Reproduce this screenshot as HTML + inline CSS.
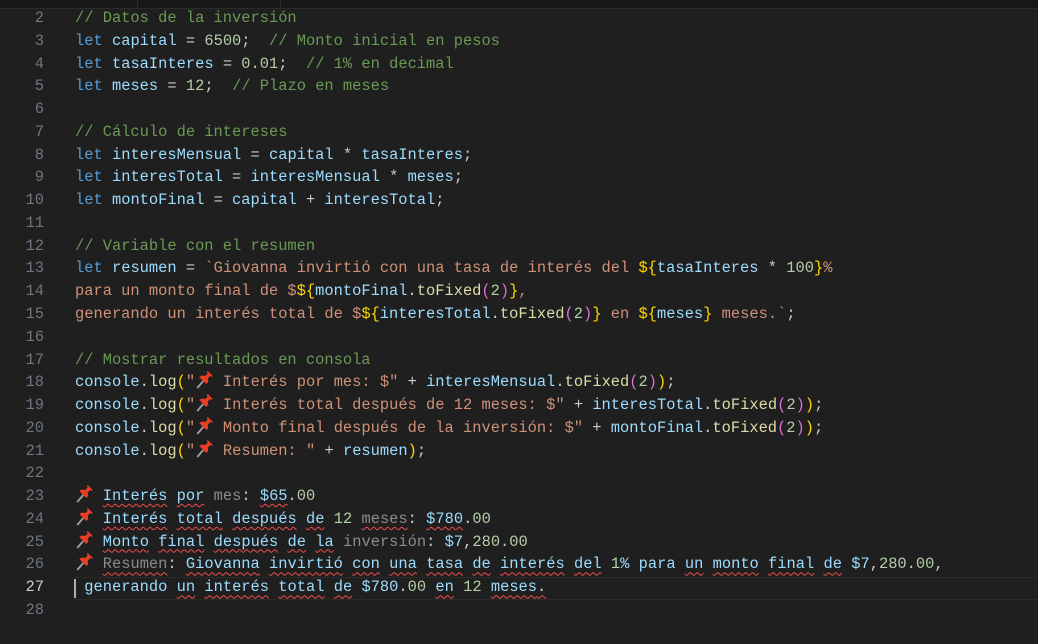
<!DOCTYPE html>
<html><head><meta charset="utf-8"><style>
html,body{margin:0;padding:0;background:#1f1f1f;width:1038px;height:626px;overflow:hidden}
.top{position:absolute;left:0;top:0;width:1038px;height:8px;background:#181818;border-bottom:1px solid #2b2b2b}
.top i{position:absolute;top:0;height:8px;width:1px;background:#2b2b2b}
.ed{position:absolute;left:0;top:7px;font-family:"Liberation Mono",monospace;font-size:15.4px;line-height:22.77px;white-space:pre;color:#cccccc}
.ln{position:absolute;left:0;width:44px;text-align:right;color:#6e7681}
.cd{position:absolute;left:75px}
.k{color:#569cd6}.v{color:#9cdcfe}.n{color:#b5cea8}.c{color:#6a9955}.s{color:#ce9178}.f{color:#dcdcaa}
.y{color:#ffd700}.m{color:#da70d6}.g{color:#8b8b8b}
.w{text-decoration:underline wavy #f14c4c;text-decoration-thickness:1px;text-underline-offset:3px}
.pin{display:inline-block;width:18.5px;height:18px;vertical-align:-3px}
.cur{position:absolute;left:73px;right:0;border-top:1px solid #2a2a2a;border-bottom:1px solid #2a2a2a;height:21px}
.caret{position:absolute;left:74px;width:2px;height:19px;background:#aeafad}
</style></head><body>
<div class="top"><i style="left:137px"></i><i style="left:280px"></i></div>
<div class="cur" style="top:577px"></div>
<div class="caret" style="top:579px"></div>
<svg width="0" height="0" style="position:absolute"><defs><g id="p"><path d="M2 17 L8 10" stroke="#a0a0a0" stroke-width="1.8"/><path d="M6 8 L11 13 L13 11 L12.5 7.5 L15 5 L16.5 6 L17.5 5 L12.5 0 L11.5 1 L12.5 2.5 L10 5 L6.5 4.5 L4 6 Z" fill="#ea3d25"/></g></defs></svg>
<div class="ed">
<div class="ln" style="top:0">2</div><div class="cd" style="top:0"><span class="c">// Datos de la inversión</span></div>
<div class="ln" style="top:22.77px">3</div><div class="cd" style="top:22.77px"><span class="k">let</span> <span class="v">capital</span> = <span class="n">6500</span>;  <span class="c">// Monto inicial en pesos</span></div>
<div class="ln" style="top:45.54px">4</div><div class="cd" style="top:45.54px"><span class="k">let</span> <span class="v">tasaInteres</span> = <span class="n">0.01</span>;  <span class="c">// 1% en decimal</span></div>
<div class="ln" style="top:68.31px">5</div><div class="cd" style="top:68.31px"><span class="k">let</span> <span class="v">meses</span> = <span class="n">12</span>;  <span class="c">// Plazo en meses</span></div>
<div class="ln" style="top:91.08px">6</div>
<div class="ln" style="top:113.85px">7</div><div class="cd" style="top:113.85px"><span class="c">// Cálculo de intereses</span></div>
<div class="ln" style="top:136.62px">8</div><div class="cd" style="top:136.62px"><span class="k">let</span> <span class="v">interesMensual</span> = <span class="v">capital</span> * <span class="v">tasaInteres</span>;</div>
<div class="ln" style="top:159.39px">9</div><div class="cd" style="top:159.39px"><span class="k">let</span> <span class="v">interesTotal</span> = <span class="v">interesMensual</span> * <span class="v">meses</span>;</div>
<div class="ln" style="top:182.16px">10</div><div class="cd" style="top:182.16px"><span class="k">let</span> <span class="v">montoFinal</span> = <span class="v">capital</span> + <span class="v">interesTotal</span>;</div>
<div class="ln" style="top:204.93px">11</div>
<div class="ln" style="top:227.7px">12</div><div class="cd" style="top:227.7px"><span class="c">// Variable con el resumen</span></div>
<div class="ln" style="top:250.47px">13</div><div class="cd" style="top:250.47px"><span class="k">let</span> <span class="v">resumen</span> = <span class="s">`Giovanna invirtió con una tasa de interés del </span><span class="y">${</span><span class="v">tasaInteres</span> * <span class="n">100</span><span class="y">}</span><span class="s">%</span></div>
<div class="ln" style="top:273.24px">14</div><div class="cd" style="top:273.24px"><span class="s">para un monto final de $</span><span class="y">${</span><span class="v">montoFinal</span>.<span class="f">toFixed</span><span class="m">(</span><span class="n">2</span><span class="m">)</span><span class="y">}</span><span class="s">,</span></div>
<div class="ln" style="top:296.01px">15</div><div class="cd" style="top:296.01px"><span class="s">generando un interés total de $</span><span class="y">${</span><span class="v">interesTotal</span>.<span class="f">toFixed</span><span class="m">(</span><span class="n">2</span><span class="m">)</span><span class="y">}</span><span class="s"> en </span><span class="y">${</span><span class="v">meses</span><span class="y">}</span><span class="s"> meses.`</span>;</div>
<div class="ln" style="top:318.78px">16</div>
<div class="ln" style="top:341.55px">17</div><div class="cd" style="top:341.55px"><span class="c">// Mostrar resultados en consola</span></div>
<div class="ln" style="top:364.32px">18</div><div class="cd" style="top:364.32px"><span class="v">console</span>.<span class="f">log</span><span class="y">(</span><span class="s">"<svg class="pin" viewBox="0 0 18 18"><use href="#p"/></svg> Interés por mes: $"</span> + <span class="v">interesMensual</span>.<span class="f">toFixed</span><span class="m">(</span><span class="n">2</span><span class="m">)</span><span class="y">)</span>;</div>
<div class="ln" style="top:387.09px">19</div><div class="cd" style="top:387.09px"><span class="v">console</span>.<span class="f">log</span><span class="y">(</span><span class="s">"<svg class="pin" viewBox="0 0 18 18"><use href="#p"/></svg> Interés total después de 12 meses: $"</span> + <span class="v">interesTotal</span>.<span class="f">toFixed</span><span class="m">(</span><span class="n">2</span><span class="m">)</span><span class="y">)</span>;</div>
<div class="ln" style="top:409.86px">20</div><div class="cd" style="top:409.86px"><span class="v">console</span>.<span class="f">log</span><span class="y">(</span><span class="s">"<svg class="pin" viewBox="0 0 18 18"><use href="#p"/></svg> Monto final después de la inversión: $"</span> + <span class="v">montoFinal</span>.<span class="f">toFixed</span><span class="m">(</span><span class="n">2</span><span class="m">)</span><span class="y">)</span>;</div>
<div class="ln" style="top:432.63px">21</div><div class="cd" style="top:432.63px"><span class="v">console</span>.<span class="f">log</span><span class="y">(</span><span class="s">"<svg class="pin" viewBox="0 0 18 18"><use href="#p"/></svg> Resumen: "</span> + <span class="v">resumen</span><span class="y">)</span>;</div>
<div class="ln" style="top:455.4px">22</div>
<div class="ln" style="top:478.17px">23</div><div class="cd" style="top:478.17px"><span class="w"><svg class="pin" viewBox="0 0 18 18"><use href="#p"/></svg></span> <span class="v w">Interés</span> <span class="v w">por</span> <span class="g">mes</span>: <span class="v w">$65</span>.<span class="n">00</span></div>
<div class="ln" style="top:500.94px">24</div><div class="cd" style="top:500.94px"><span class="w"><svg class="pin" viewBox="0 0 18 18"><use href="#p"/></svg></span> <span class="v w">Interés</span> <span class="v w">total</span> <span class="v w">después</span> <span class="v w">de</span> <span class="n">12</span> <span class="g w">meses</span>: <span class="v w">$780</span>.<span class="n">00</span></div>
<div class="ln" style="top:523.71px">25</div><div class="cd" style="top:523.71px"><span class="w"><svg class="pin" viewBox="0 0 18 18"><use href="#p"/></svg></span> <span class="v w">Monto</span> <span class="v w">final</span> <span class="v w">después</span> <span class="v w">de</span> <span class="v w">la</span> <span class="g">inversión</span>: <span class="v">$7</span>,<span class="n">280.00</span></div>
<div class="ln" style="top:546.48px">26</div><div class="cd" style="top:546.48px"><span class="w"><svg class="pin" viewBox="0 0 18 18"><use href="#p"/></svg></span> <span class="g w">Resumen</span>: <span class="v w">Giovanna</span> <span class="v w">invirtió</span> <span class="v w">con</span> <span class="v w">una</span> <span class="v w">tasa</span> <span class="v w">de</span> <span class="v w">interés</span> <span class="v w">del</span> <span class="n">1</span><span class="v">%</span> <span class="v">para</span> <span class="v w">un</span> <span class="v w">monto</span> <span class="v w">final</span> <span class="v w">de</span> <span class="v">$7</span>,<span class="n">280.00</span>,</div>
<div class="ln" style="top:569.25px;color:#cccccc">27</div><div class="cd" style="top:569.25px"> <span class="v">generando</span> <span class="v w">un</span> <span class="v w">interés</span> <span class="v w">total</span> <span class="v w">de</span> <span class="v">$780</span>.<span class="n">00</span> <span class="v w">en</span> <span class="n">12</span> <span class="v w">meses</span><span class="w">.</span></div>
<div class="ln" style="top:592.02px">28</div>
</div>
</body></html>
